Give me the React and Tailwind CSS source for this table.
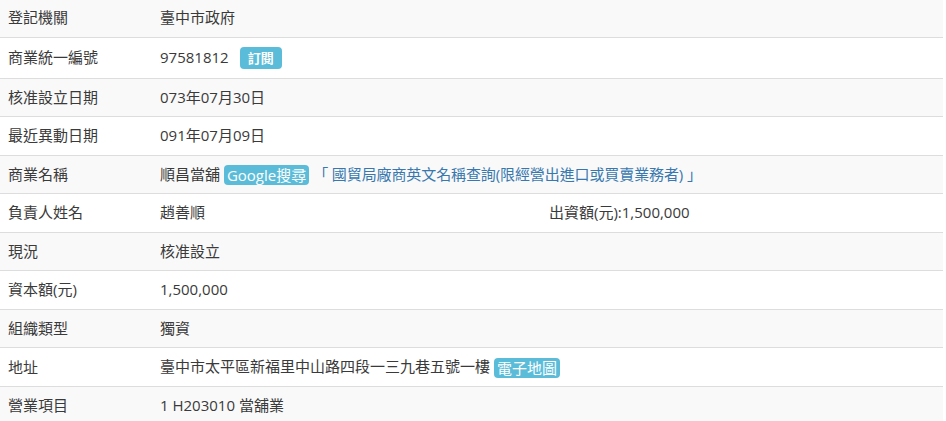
import React from 'react';

const rows = [
    { label: '登記機關', value: '臺中市政府' },
    { label: '商業統一編號', value: 'ubn' },
    { label: '核准設立日期', value: '073年07月30日' },
    { label: '最近異動日期', value: '091年07月09日' },
    { label: '商業名稱', value: 'name' },
    { label: '負責人姓名', value: 'owner' },
    { label: '現況', value: '核准設立' },
    { label: '資本額(元)', value: '1,500,000' },
    { label: '組織類型', value: '獨資' },
    { label: '地址', value: 'addr' },
    { label: '營業項目', value: '1 H203010 當舖業' },
];

const Badge = ({ children, className = '' }) => (
    <span className={`inline-block bg-[#5bbcd9] text-white rounded-[4px] align-middle ${className}`}>{children}</span>
);

const renderValue = (v) => {
    if (v === 'ubn') {
        return (
            <span className="flex items-center">
                97581812
                <Badge className="ml-[11px] my-[1px] px-[8px] h-[22px] leading-[22px] text-[13px] font-semibold">訂閱</Badge>
            </span>
        );
    }
    if (v === 'name') {
        return (
            <span>
                順昌當舖{' '}
                <Badge className="px-[3px] h-[20px] leading-[20px] text-[15px]">Google搜尋</Badge>{' '}
                <span className="text-[#3878ae] tracking-[-0.1px]">「 國貿局廠商英文名稱查詢(限經營出進口或買賣業務者) 」</span>
            </span>
        );
    }
    if (v === 'owner') {
        return (
            <span className="flex">
                <span className="w-[389px]">趙善順</span>
                <span>出資額(元):1,500,000</span>
            </span>
        );
    }
    if (v === 'addr') {
        return (
            <span>
                臺中市太平區新福里中山路四段一三九巷五號一樓{' '}
                <Badge className="px-[3px] h-[20px] leading-[20px] text-[15px]">電子地圖</Badge>
            </span>
        );
    }
    return v;
};

export default function App() {
    return (
        <div className="-mt-[2px] w-[943px] bg-white text-[#3a3a3a] text-[15px] font-['Open_Sans','Noto_Sans_CJK_TC',sans-serif]">
            {rows.map((r, idx) => (
                <div
                    key={idx}
                    className={`flex items-center px-2 py-2 leading-[21.5px] border-t border-[#dddddd] ${idx % 2 === 0 ? 'bg-[#f9f9f9]' : 'bg-white'}`}
                >
                    <div className="w-[152px] shrink-0">{r.label}</div>
                    <div className="flex-1">{renderValue(r.value)}</div>
                </div>
            ))}
        </div>
    );
}
